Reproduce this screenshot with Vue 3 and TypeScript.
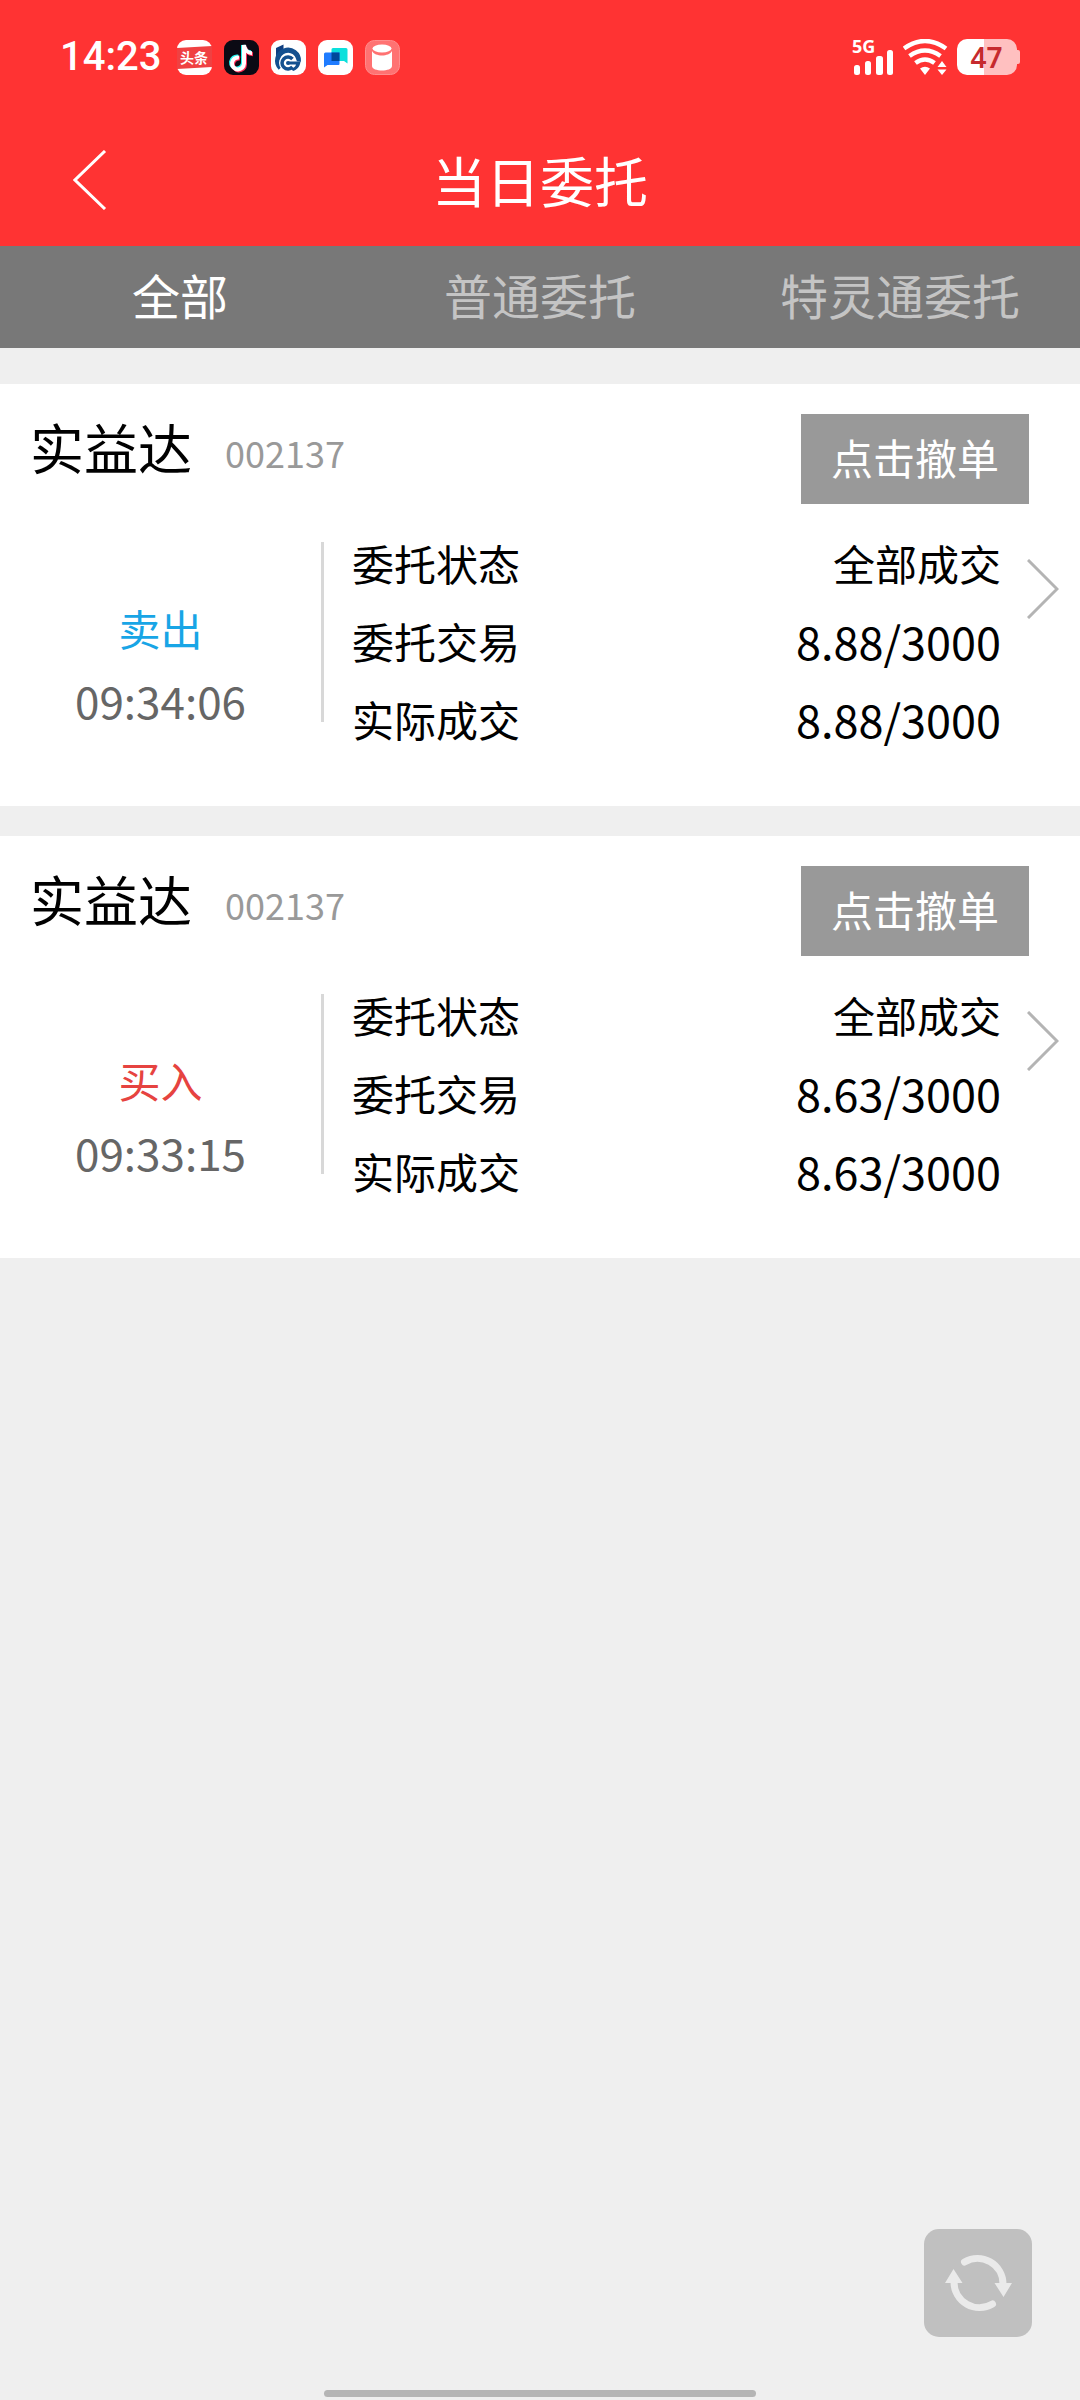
<script setup lang="ts">
import { ref } from 'vue'

interface Order {
  name: string
  code: string
  side: 'sell' | 'buy'
  sideLabel: string
  time: string
  rows: { label: string; value: string; numeric: boolean }[]
}

const tabs: string[] = ['全部', '普通委托', '特灵通委托']
const activeTab = ref(0)

const orders: Order[] = [
  {
    name: '实益达',
    code: '002137',
    side: 'sell',
    sideLabel: '卖出',
    time: '09:34:06',
    rows: [
      { label: '委托状态', value: '全部成交', numeric: false },
      { label: '委托交易', value: '8.88/3000', numeric: true },
      { label: '实际成交', value: '8.88/3000', numeric: true },
    ],
  },
  {
    name: '实益达',
    code: '002137',
    side: 'buy',
    sideLabel: '买入',
    time: '09:33:15',
    rows: [
      { label: '委托状态', value: '全部成交', numeric: false },
      { label: '委托交易', value: '8.63/3000', numeric: true },
      { label: '实际成交', value: '8.63/3000', numeric: true },
    ],
  },
]
</script>

<template>
  <div class="page">
    <header class="header">
      <div class="status">
        <div class="status-left">
          <span class="clock">14:23</span>
          <svg class="app" viewBox="0 0 35 35">
            <rect width="35" height="35" rx="9" fill="#fff" />
            <path d="M0 8L35 6V27L0 29Z" fill="#f04142" />
            <text x="17" y="23" text-anchor="middle" class="app-text">头条</text>
          </svg>
          <svg class="app" viewBox="0 0 35 35">
            <rect width="35" height="35" rx="9" fill="#0b0a14" />
            <g fill="none" stroke-width="4">
              <path d="M14 16.500a6 6 0 1 0 5 6V5c.5 4 3.500 7 8 7.200" stroke="#25f4ee" />
              <path d="M16 18.500a6 6 0 1 0 5 6V7c.5 4 3.500 7 8 7.200" stroke="#fe2c55" />
              <path d="M15 17.500a6 6 0 1 0 5 6V5c.5 4.500 3.500 8 8 8.200" stroke="#fff" />
            </g>
          </svg>
          <svg class="app" viewBox="0 0 35 35">
            <rect width="35" height="35" rx="9" fill="#fff" />
            <path d="M5 8L12.500 4.500V12L5 20Z" fill="#0f3f80" />
            <path d="M9.500 28A10.500 10.500 0 1 1 27.500 21.500" fill="none" stroke="#14508f" stroke-width="5" />
            <circle cx="17" cy="23" r="9" fill="#fff" />
            <path d="M21.500 19A6 6 0 1 0 21.500 27" fill="none" stroke="#14508f" stroke-width="3.500" />
            <circle cx="17" cy="23" r="2" fill="#14508f" />
            <path d="M17 21.500H29.500C29 26.500 26 30 22 31L20 28.500C23 28 24.500 26.500 25 24.500H17Z" fill="#14508f" />
          </svg>
          <svg class="app" viewBox="0 0 35 35">
            <rect width="35" height="35" rx="9" fill="#fff" />
            <path d="M15 8h13a1.500 1.500 0 0 1 1.500 1.500v14L26 21H13.500V9.500A1.500 1.500 0 0 1 15 8z" fill="#0be0dc" />
            <path d="M7.500 12.500H21.500V24a1 1 0 0 1-1 1H9.500L6 27.500V14a1.500 1.500 0 0 1 1.500-1.500z" fill="#1f7cff" />
            <path d="M13.500 12.500h8V21h-8z" fill="#00489a" />
          </svg>
          <svg class="app" viewBox="0 0 35 35">
            <rect x=".5" y=".5" width="34" height="34" rx="9" fill="#ff7272" stroke="#ff8d8d" />
            <path d="M7 11c3 6 17 6 20 0v15c0 6-20 6-20 0z" fill="#fff" />
            <ellipse cx="17" cy="8.500" rx="9.500" ry="4" fill="#fff" />
          </svg>
        </div>
        <div class="status-right">
          <div class="signal">
            <span class="network">5G</span>
            <svg viewBox="0 0 42 36">
              <g fill="#fff">
                <rect x="2" y="26" width="6" height="10" rx="2.500" />
                <rect x="13" y="22" width="6" height="14" rx="2.500" />
                <rect x="24" y="17" width="7" height="19" rx="2.500" />
                <rect x="35" y="11" width="6" height="25" rx="2.500" />
              </g>
            </svg>
          </div>
          <svg class="wifi" viewBox="0 0 45 36">
            <g fill="none" stroke="#fff" stroke-width="4.500">
              <path d="M1 9.500Q22 -5.500 43 9.500" />
              <path d="M6.500 17Q22 6 37.500 17" />
              <path d="M12.500 24Q22 17 31.500 24" />
            </g>
            <path d="M17 29.500Q22 26 27 29.500L22 36ZM34.500 28l4.500-6 4.500 6zM34.500 30.500l4.500 5.500 4.500-5.500z" fill="#fff" />
          </svg>
          <div class="battery">
            <svg viewBox="0 0 63 36">
              <path d="M27 0h23a10 10 0 0 1 10 10v1h1a2 2 0 0 1 2 2v10a2 2 0 0 1-2 2h-1v1a10 10 0 0 1-10 10H27z" fill="#ffc0c0" />
              <path d="M10 0h17v36H10A10 10 0 0 1 0 26V10A10 10 0 0 1 10 0z" fill="#fff" />
            </svg>
            <span class="level">47</span>
          </div>
        </div>
      </div>
      <div class="nav">
        <button class="back" type="button" aria-label="返回">
          <svg viewBox="0 0 34 60"><path d="M32 1L2 30L32 59" fill="none" stroke="#fff" stroke-width="3" /></svg>
        </button>
        <h1 class="title">当日委托</h1>
      </div>
    </header>

    <nav class="tabs">
      <button
        v-for="(tab, i) in tabs"
        :key="tab"
        type="button"
        class="tab"
        :class="{ active: i === activeTab }"
        @click="activeTab = i"
      >{{ tab }}</button>
    </nav>

    <main class="list">
      <article v-for="order in orders" :key="order.time" class="card">
        <div class="card-head">
          <h2 class="name">{{ order.name }}</h2>
          <span class="code">{{ order.code }}</span>
          <button class="cancel" type="button">点击撤单</button>
        </div>
        <div class="card-body">
          <div class="side">
            <span :class="order.side">{{ order.sideLabel }}</span>
            <time class="time">{{ order.time }}</time>
          </div>
          <dl class="rows">
            <div v-for="row in order.rows" :key="row.label" class="row">
              <dt>{{ row.label }}</dt>
              <dd :class="{ numeric: row.numeric }">{{ row.value }}</dd>
            </div>
          </dl>
          <button class="more" type="button" aria-label="详情">
            <svg viewBox="0 0 32 60"><path d="M1 1L30 30L1 59" fill="none" stroke="#b4b4b4" stroke-width="3" /></svg>
          </button>
        </div>
      </article>
    </main>

    <button class="refresh" type="button" aria-label="刷新">
      <svg viewBox="0 0 108 108">
        <g fill="none" stroke="#eaeaea" stroke-width="7" stroke-linecap="round">
          <path d="M40.500 33A25.500 25.500 0 0 1 79 55" />
          <path d="M68.500 75A25.500 25.500 0 0 1 30 53" />
        </g>
        <path d="M70.500 54H88L79.500 68ZM21 54H38.500L29.500 40Z" fill="#eaeaea" />
      </svg>
    </button>
    <div class="home-bar"></div>
  </div>
</template>

<style>
body {
  margin: 0;
  background: #efefef;
}
</style>

<style scoped>
.page {
  display: flex;
  flex-direction: column;
  min-height: 100vh;
  background: #efefef;
  color: #000;
  font-family: "Noto Sans CJK SC", sans-serif;
}

button {
  margin: 0;
  padding: 0;
  border: 0;
  background: none;
  color: inherit;
  font-family: inherit;
}

svg {
  display: block;
}

.header {
  background: #ff3333;
  color: #fff;
}

.status {
  display: flex;
  align-items: center;
  justify-content: space-between;
  height: 114px;
  padding: 0 60px;
}

.status-left {
  display: flex;
  align-items: center;
  gap: 12px;
}

.clock {
  margin-right: 4px;
  font-family: Roboto, sans-serif;
  font-size: 40px;
  font-weight: 500;
  line-height: 48px;
}

.app {
  width: 35px;
  height: 35px;
}

.app-text {
  fill: #fff;
  font-size: 14px;
  font-weight: 700;
}

.status-right {
  display: flex;
  align-items: center;
  gap: 9px;
}

.signal,
.battery {
  position: relative;
}

.signal svg {
  width: 42px;
  height: 36px;
}

.network {
  position: absolute;
  top: -6px;
  left: 0;
  font-family: "Noto Sans", sans-serif;
  font-size: 18px;
  font-weight: 700;
  line-height: 26px;
}

.wifi {
  width: 45px;
  height: 36px;
}

.battery svg {
  width: 63px;
  height: 36px;
}

.level {
  position: absolute;
  inset: 0 4px 0 0;
  color: #c62a2e;
  font-family: "Noto Sans", sans-serif;
  font-size: 28px;
  font-weight: 600;
  line-height: 36px;
  text-align: center;
}

.nav {
  display: grid;
  grid-template-columns: 1fr auto 1fr;
  align-items: center;
  height: 132px;
}

.back {
  justify-self: start;
  margin-left: 73px;
}

.back svg {
  width: 34px;
  height: 60px;
}

.title {
  margin: 0;
  font-size: 54px;
  font-weight: 400;
  line-height: 60px;
}

.tabs {
  display: flex;
  height: 102px;
  background: #787878;
}

.tab {
  flex: 1 1 0;
  padding-bottom: 6px;
  color: #c4c4c4;
  font-size: 48px;
  line-height: 60px;
}

.tab.active {
  color: #fff;
}

.list {
  display: flex;
  flex-direction: column;
  gap: 30px;
  padding-top: 36px;
}

.card {
  background: #fff;
}

.card-head {
  display: flex;
  align-items: flex-start;
  padding: 30px 51px 0 30px;
}

.name {
  margin: 0;
  font-size: 54px;
  font-weight: 400;
  line-height: 66px;
}

.code {
  margin-left: 33px;
  color: #999;
  font-size: 36px;
  line-height: 76px;
}

.cancel {
  width: 228px;
  height: 90px;
  margin-left: auto;
  padding-bottom: 6px;
  background: #999;
  color: #fff;
  font-size: 42px;
}

.card-body {
  display: flex;
  align-items: flex-start;
  padding: 20px 0 48px;
}

.side {
  display: flex;
  flex: none;
  flex-direction: column;
  align-items: center;
  gap: 30px;
  box-sizing: border-box;
  width: 30%;
  height: 180px;
  margin-top: 18px;
  padding-top: 65px;
  border-right: 3px solid #d8d8d8;
  font-size: 42px;
  line-height: 42px;
}

.sell {
  color: #18a5e6;
}

.buy {
  color: #e64340;
}

.time {
  color: #666;
  font-size: 44px;
}

.rows {
  flex: 1;
  margin: 0 26px 0 28px;
}

.row {
  display: flex;
  justify-content: space-between;
  font-size: 42px;
  line-height: 78px;
}

.row dd {
  margin: 0;
}

.row .numeric {
  font-size: 45px;
}

.more {
  margin: 35px 21px 0 0;
}

.more svg {
  width: 32px;
  height: 60px;
}

.refresh {
  position: fixed;
  right: 48px;
  bottom: 63px;
  width: 108px;
  height: 108px;
  border-radius: 15px;
  background: #c0c0c0;
}

.home-bar {
  width: 40%;
  height: 7px;
  margin: auto auto 3px;
  border-radius: 4px;
  background: #b5b5b5;
}
</style>
